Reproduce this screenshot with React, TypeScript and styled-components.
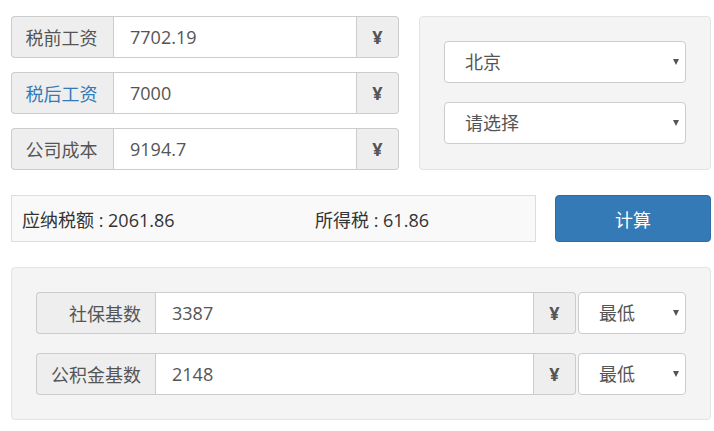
import styled, { createGlobalStyle } from "styled-components";

const GlobalStyle = createGlobalStyle`
    html, body {
        margin: 0;
        padding: 0;
        background: #fff;
    }
    body {
        font-family: "Open Sans", "Noto Sans CJK SC", sans-serif;
        font-size: 18px;
        color: #555;
    }
    * {
        box-sizing: border-box;
    }
`

const Page = styled.div`
    display: flex;
    flex-direction: column;
    gap: 25px;
    width: 714px;
    padding: 16px 3px 10px 11px;
`

const TopRow = styled.div`
    display: grid;
    grid-template-columns: 388px 1fr;
    column-gap: 20px;
`

const Stack = styled.div`
    display: flex;
    flex-direction: column;
    gap: ${(p: { $gap: number }) => p.$gap}px;
`

const InputGroup = styled.div<{ $grow?: boolean }>`
    display: flex;
    height: 42px;
    flex: ${(p) => (p.$grow ? 1 : "none")};
`

const Label = styled.span<{ $width: number; $align?: string; $active?: boolean }>`
    display: flex;
    align-items: center;
    justify-content: ${(p) => (p.$align === "right" ? "flex-end" : "center")};
    width: ${(p) => p.$width}px;
    flex-shrink: 0;
    padding: 0 14px 0 12px;
    white-space: nowrap;
    background: #eee;
    border: 1px solid #ccc;
    border-right: none;
    border-radius: 4px 0 0 4px;
    color: ${(p) => (p.$active ? "#337ab7" : "#555")};
`

const Field = styled.input`
    flex: 1;
    min-width: 0;
    height: 100%;
    padding: 0 16px;
    border: 1px solid #ccc;
    border-radius: 0;
    font: inherit;
    color: #555;
    background: #fff;
    outline: none;
`

const Yen = styled.span`
    display: flex;
    align-items: center;
    justify-content: center;
    width: 42px;
    flex-shrink: 0;
    background: #eee;
    border: 1px solid #ccc;
    border-left: none;
    border-radius: 0 4px 4px 0;
    font-weight: 700;
    color: #555;
`

const Well = styled.div`
    display: flex;
    flex-direction: column;
    gap: ${(p: { $gap: number }) => p.$gap}px;
    padding: 24px;
    background: #f4f4f4;
    border: 1px solid #e3e3e3;
    border-radius: 4px;
`

const SelectWrap = styled.div<{ $width?: number }>`
    position: relative;
    height: 42px;
    width: ${(p) => (p.$width ? `${p.$width}px` : "100%")};
    flex-shrink: 0;

    &::after {
        content: "";
        position: absolute;
        right: 7px;
        top: 18px;
        border-left: 3.5px solid transparent;
        border-right: 3.5px solid transparent;
        border-top: 6px solid #555;
        pointer-events: none;
    }
`

const Select = styled.select`
    appearance: none;
    width: 100%;
    height: 100%;
    padding: 0 20px 0 20px;
    background: #fff;
    border: 1px solid #ccc;
    border-radius: 4px;
    font: inherit;
    color: #555;
    outline: none;
`

const ResultRow = styled.div`
    display: grid;
    grid-template-columns: 525px 1fr;
    column-gap: 19px;
`

const ResultBox = styled.div`
    display: grid;
    grid-template-columns: 293px 1fr;
    align-items: center;
    height: 47px;
    padding: 0 10px;
    background: #f9f9f9;
    border: 1px solid #ddd;
    color: #333;
`

const Button = styled.button`
    height: 47px;
    background: #337ab7;
    border: 1px solid #2e6da4;
    border-radius: 4px;
    color: #fff;
    font: inherit;
`

const BaseRow = styled.div`
    display: flex;
    gap: 2px;
`

export default function App() {
    return (
        <>
            <GlobalStyle />
            <Page>
                <TopRow>
                    <Stack $gap={14}>
                        <InputGroup>
                            <Label $width={102}>税前工资</Label>
                            <Field defaultValue="7702.19" />
                            <Yen>¥</Yen>
                        </InputGroup>
                        <InputGroup>
                            <Label $width={102} $active>税后工资</Label>
                            <Field defaultValue="7000" />
                            <Yen>¥</Yen>
                        </InputGroup>
                        <InputGroup>
                            <Label $width={102}>公司成本</Label>
                            <Field defaultValue="9194.7" />
                            <Yen>¥</Yen>
                        </InputGroup>
                    </Stack>
                    <Well $gap={19}>
                        <SelectWrap>
                            <Select defaultValue="北京">
                                <option>北京</option>
                            </Select>
                        </SelectWrap>
                        <SelectWrap>
                            <Select defaultValue="请选择">
                                <option>请选择</option>
                            </Select>
                        </SelectWrap>
                    </Well>
                </TopRow>
                <ResultRow>
                    <ResultBox>
                        <span>应纳税额 : 2061.86</span>
                        <span>所得税 : 61.86</span>
                    </ResultBox>
                    <Button>计算</Button>
                </ResultRow>
                <Well $gap={19}>
                    <BaseRow>
                        <InputGroup $grow>
                            <Label $width={119} $align="right">社保基数</Label>
                            <Field defaultValue="3387" />
                            <Yen>¥</Yen>
                        </InputGroup>
                        <SelectWrap $width={108}>
                            <Select defaultValue="最低">
                                <option>最低</option>
                            </Select>
                        </SelectWrap>
                    </BaseRow>
                    <BaseRow>
                        <InputGroup $grow>
                            <Label $width={119} $align="right">公积金基数</Label>
                            <Field defaultValue="2148" />
                            <Yen>¥</Yen>
                        </InputGroup>
                        <SelectWrap $width={108}>
                            <Select defaultValue="最低">
                                <option>最低</option>
                            </Select>
                        </SelectWrap>
                    </BaseRow>
                </Well>
            </Page>
        </>
    );
}
